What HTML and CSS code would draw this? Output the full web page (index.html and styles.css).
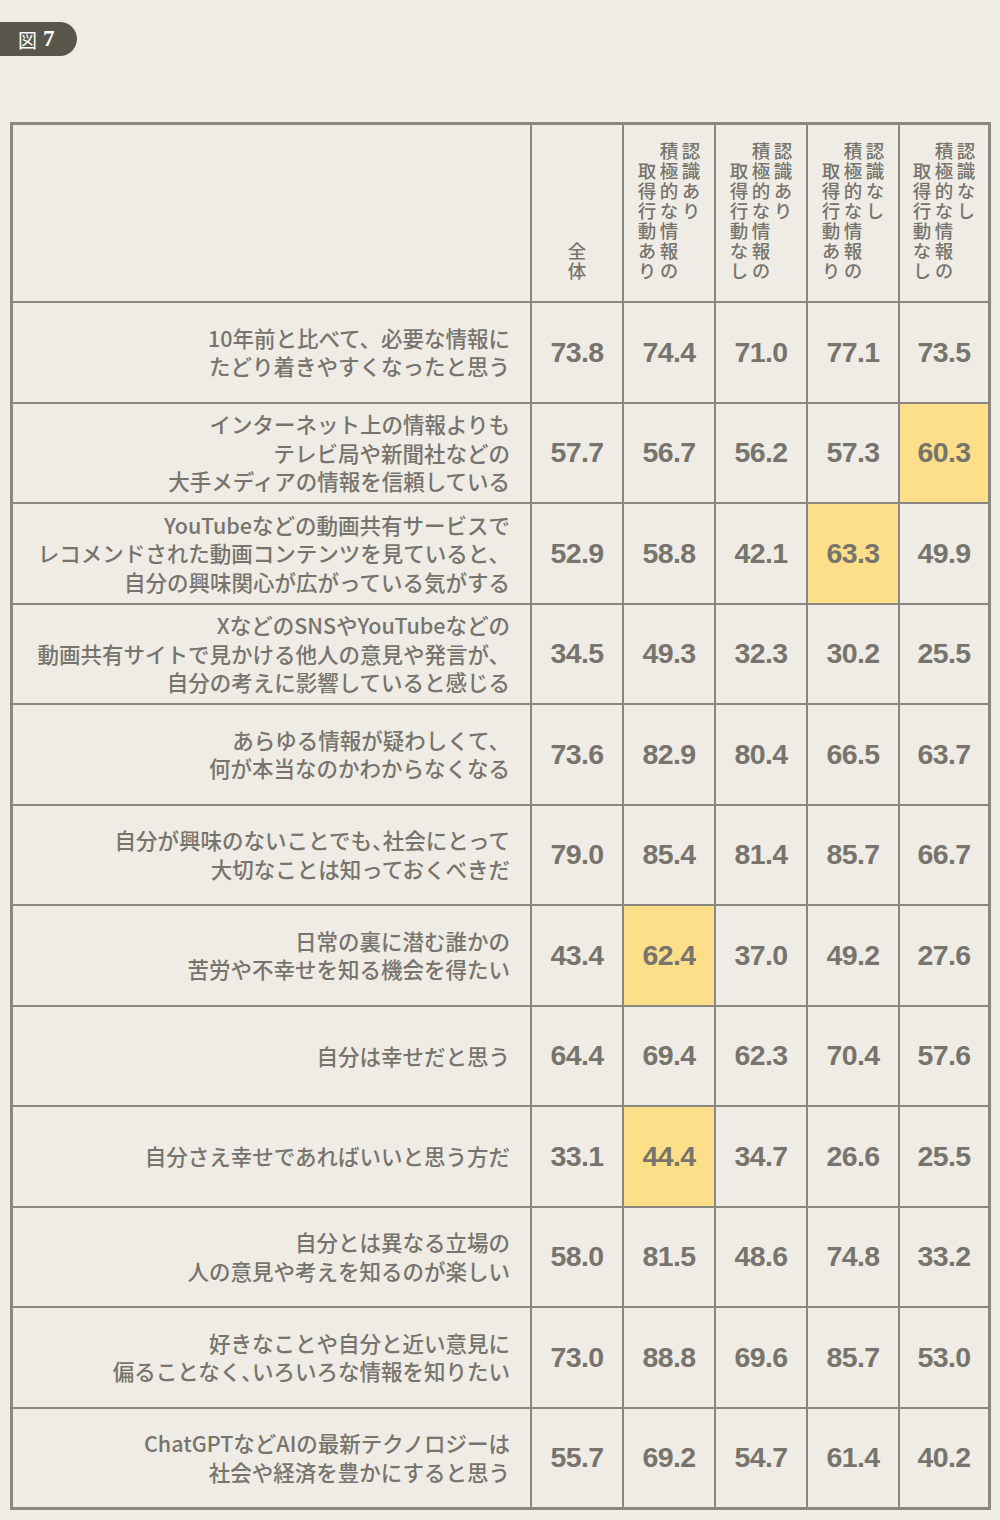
FILE: index.html
```html
<!DOCTYPE html>
<html lang="ja">
<head>
<meta charset="utf-8">
<title>図7</title>
<link rel="stylesheet" href="styles.css">
</head>
<body>
<div class="badge"><span class="badge-kanji">図</span><span class="badge-num">7</span></div>
<div class="table">
  <div class="cell head"></div>
  <div class="cell head"><div class="vt">全体</div></div>
  <div class="cell head"><div class="vt">認識あり<br>積極的な情報の<br>　取得行動あり</div></div>
  <div class="cell head"><div class="vt">認識あり<br>積極的な情報の<br>　取得行動なし</div></div>
  <div class="cell head"><div class="vt">認識なし<br>積極的な情報の<br>　取得行動あり</div></div>
  <div class="cell head"><div class="vt">認識なし<br>積極的な情報の<br>　取得行動なし</div></div>

  <div class="cell label"><div class="txt">10年前と比べて、必要な情報に<br>たどり着きやすくなったと思う</div></div>
  <div class="cell num">73.8</div><div class="cell num">74.4</div><div class="cell num">71.0</div><div class="cell num">77.1</div><div class="cell num">73.5</div>

  <div class="cell label"><div class="txt">インターネット上の情報よりも<br>テレビ局や新聞社などの<br>大手メディアの情報を信頼している</div></div>
  <div class="cell num">57.7</div><div class="cell num">56.7</div><div class="cell num">56.2</div><div class="cell num">57.3</div><div class="cell num hl">60.3</div>

  <div class="cell label"><div class="txt">YouTubeなどの動画共有サービスで<br>レコメンドされた動画コンテンツを見ていると、<br>自分の興味関心が広がっている気がする</div></div>
  <div class="cell num">52.9</div><div class="cell num">58.8</div><div class="cell num">42.1</div><div class="cell num hl">63.3</div><div class="cell num">49.9</div>

  <div class="cell label"><div class="txt">XなどのSNSやYouTubeなどの<br>動画共有サイトで見かける他人の意見や発言が、<br>自分の考えに影響していると感じる</div></div>
  <div class="cell num">34.5</div><div class="cell num">49.3</div><div class="cell num">32.3</div><div class="cell num">30.2</div><div class="cell num">25.5</div>

  <div class="cell label"><div class="txt">あらゆる情報が疑わしくて、<br>何が本当なのかわからなくなる</div></div>
  <div class="cell num">73.6</div><div class="cell num">82.9</div><div class="cell num">80.4</div><div class="cell num">66.5</div><div class="cell num">63.7</div>

  <div class="cell label"><div class="txt">自分が興味のないことでも<span class="half">、</span>社会にとって<br>大切なことは知っておくべきだ</div></div>
  <div class="cell num">79.0</div><div class="cell num">85.4</div><div class="cell num">81.4</div><div class="cell num">85.7</div><div class="cell num">66.7</div>

  <div class="cell label"><div class="txt">日常の裏に潜む誰かの<br>苦労や不幸せを知る機会を得たい</div></div>
  <div class="cell num">43.4</div><div class="cell num hl">62.4</div><div class="cell num">37.0</div><div class="cell num">49.2</div><div class="cell num">27.6</div>

  <div class="cell label"><div class="txt">自分は幸せだと思う</div></div>
  <div class="cell num">64.4</div><div class="cell num">69.4</div><div class="cell num">62.3</div><div class="cell num">70.4</div><div class="cell num">57.6</div>

  <div class="cell label"><div class="txt">自分さえ幸せであればいいと思う方だ</div></div>
  <div class="cell num">33.1</div><div class="cell num hl">44.4</div><div class="cell num">34.7</div><div class="cell num">26.6</div><div class="cell num">25.5</div>

  <div class="cell label"><div class="txt">自分とは異なる立場の<br>人の意見や考えを知るのが楽しい</div></div>
  <div class="cell num">58.0</div><div class="cell num">81.5</div><div class="cell num">48.6</div><div class="cell num">74.8</div><div class="cell num">33.2</div>

  <div class="cell label"><div class="txt">好きなことや自分と近い意見に<br>偏ることなく<span class="half">、</span>いろいろな情報を知りたい</div></div>
  <div class="cell num">73.0</div><div class="cell num">88.8</div><div class="cell num">69.6</div><div class="cell num">85.7</div><div class="cell num">53.0</div>

  <div class="cell label"><div class="txt">ChatGPTなどAIの最新テクノロジーは<br>社会や経済を豊かにすると思う</div></div>
  <div class="cell num">55.7</div><div class="cell num">69.2</div><div class="cell num">54.7</div><div class="cell num">61.4</div><div class="cell num">40.2</div>
</div>
</body>
</html>
```

FILE: styles.css
```css
html, body {
  margin: 0;
  padding: 0;
  background: #efece5;
}
body {
  width: 1000px;
  height: 1520px;
  overflow: hidden;
  font-family: "Noto Sans CJK JP", "Noto Sans", sans-serif;
  color: #77746d;
}
.badge {
  margin-top: 22px;
  width: 77px;
  height: 34px;
  background: #59574b;
  border-radius: 0 17px 17px 0;
  color: #ffffff;
  display: flex;
  align-items: center;
  padding-left: 18px;
  box-sizing: border-box;
  font-family: "Liberation Serif", "Noto Sans CJK JP", serif;
}
.badge-kanji {
  font-family: "Noto Sans CJK JP", serif;
  font-size: 19px;
  font-weight: 400;
}
.badge-num {
  font-size: 23px;
  font-weight: bold;
  margin-left: 6px;
}
.table {
  margin-top: 66px;
  margin-left: 10px;
  width: 981px;
  box-sizing: border-box;
  border: 3px solid #8a8780;
  background: #8a8780;
  display: grid;
  grid-template-columns: 517px 90px 90px 90px 90px 88px;
  grid-template-rows: 176px;
  grid-auto-rows: 98.5px;
  gap: 2px;
}
.cell {
  background: #efece5;
}
.head {
  display: flex;
  justify-content: center;
  align-items: flex-end;
  padding-bottom: 19px;
}
.vt {
  writing-mode: vertical-rl;
  font-size: 18.5px;
  font-weight: 500;
  line-height: 22px;
  letter-spacing: 1.5px;
  color: #77746d;
}
.label {
  display: flex;
  align-items: center;
  justify-content: flex-end;
  padding-right: 20px;
}
.txt {
  text-align: right;
  font-size: 21.5px;
  font-weight: 500;
  line-height: 28.5px;
  white-space: nowrap;
}
.half {
  font-feature-settings: "halt";
}
.num {
  display: flex;
  align-items: center;
  justify-content: center;
  font-family: "Liberation Sans", Arial, sans-serif;
  font-weight: bold;
  font-size: 28.5px;
  letter-spacing: -0.6px;
  color: #77746d;
}
.hl {
  background: #fddf8a;
}
```
